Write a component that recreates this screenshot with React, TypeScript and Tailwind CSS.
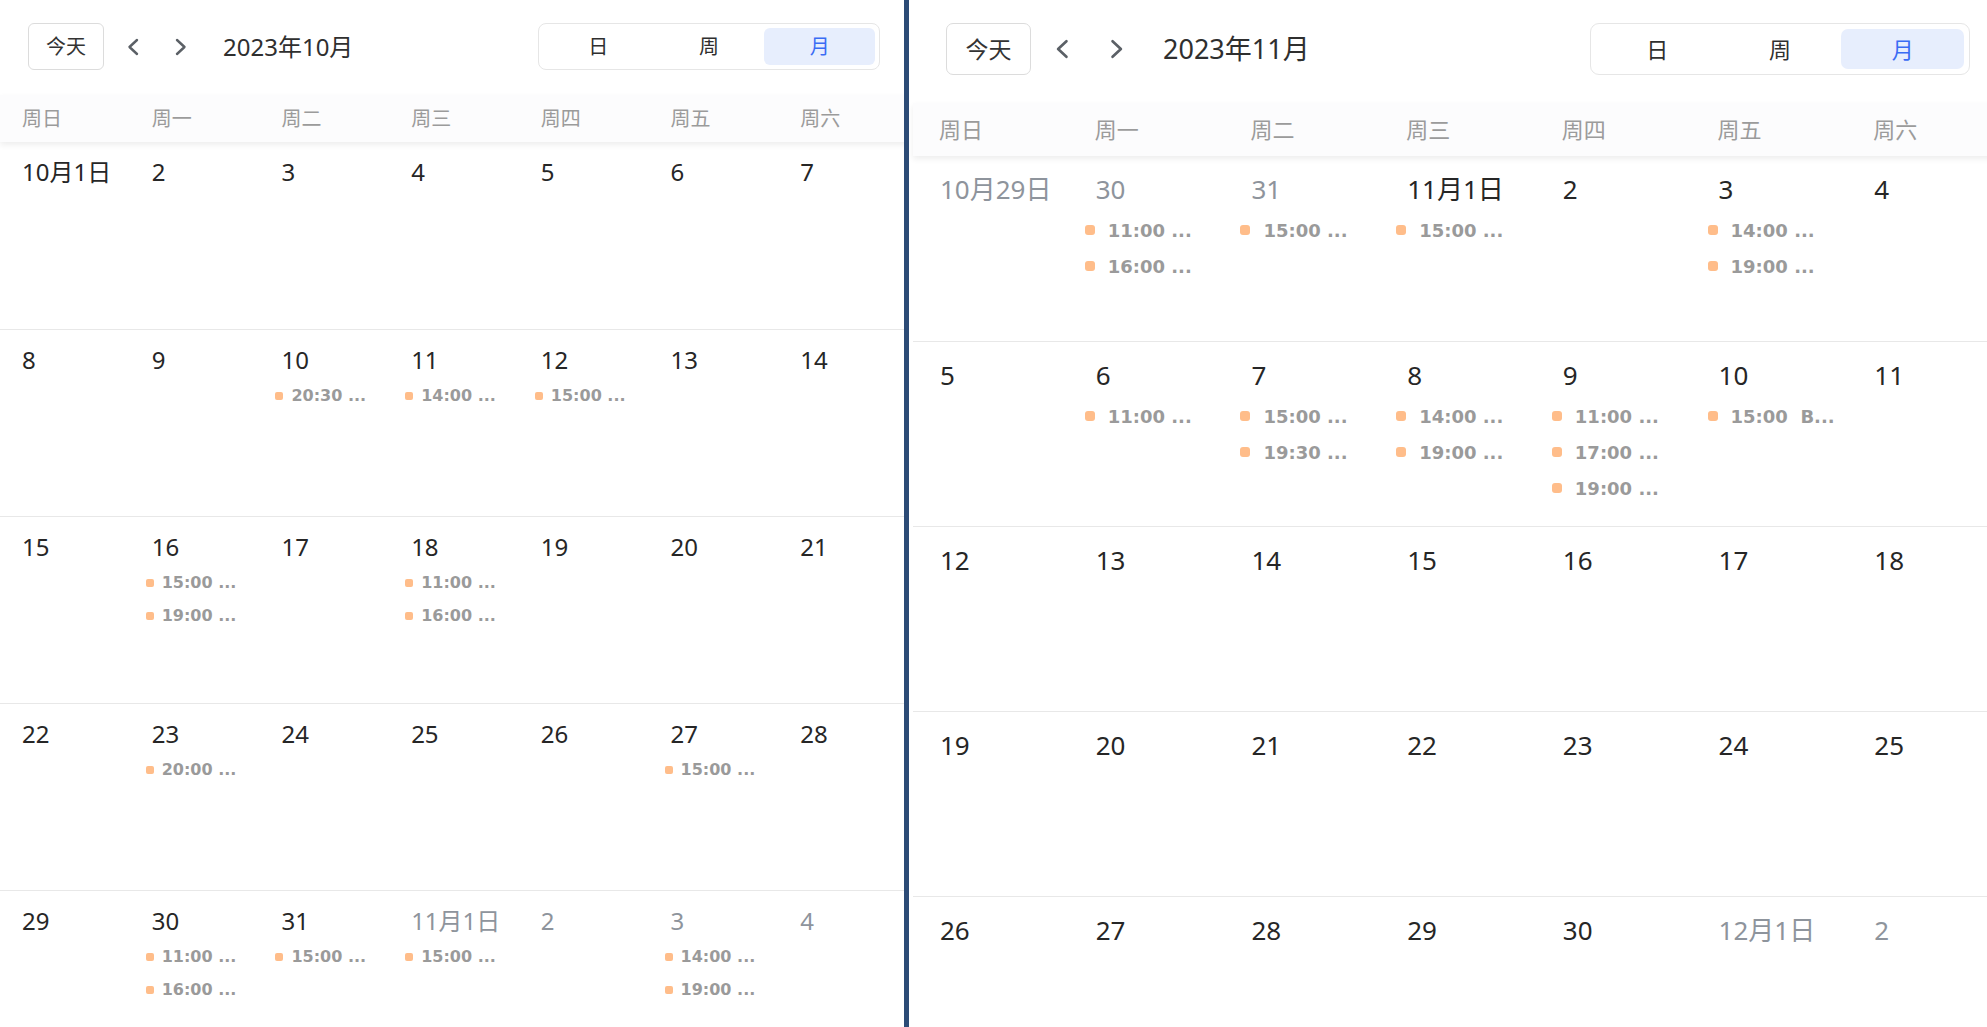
import React from 'react';

type Cell = { label: string; muted?: boolean; events?: string[] };

const d = (label: string, events: string[] = [], muted = false): Cell => ({ label, events, muted });
const m = (label: string, events: string[] = []): Cell => d(label, events, true);

const WEEKDAYS = ['周日', '周一', '周二', '周三', '周四', '周五', '周六'];

const october: Cell[][] = [
  [d('10月1日'), d('2'), d('3'), d('4'), d('5'), d('6'), d('7')],
  [d('8'), d('9'), d('10', ['20:30 ...']), d('11', ['14:00 ...']), d('12', ['15:00 ...']), d('13'), d('14')],
  [d('15'), d('16', ['15:00 ...', '19:00 ...']), d('17'), d('18', ['11:00 ...', '16:00 ...']), d('19'), d('20'), d('21')],
  [d('22'), d('23', ['20:00 ...']), d('24'), d('25'), d('26'), d('27', ['15:00 ...']), d('28')],
  [d('29'), d('30', ['11:00 ...', '16:00 ...']), d('31', ['15:00 ...']), m('11月1日', ['15:00 ...']), m('2'), m('3', ['14:00 ...', '19:00 ...']), m('4')],
];

const november: Cell[][] = [
  [m('10月29日'), m('30', ['11:00 ...', '16:00 ...']), m('31', ['15:00 ...']), d('11月1日', ['15:00 ...']), d('2'), d('3', ['14:00 ...', '19:00 ...']), d('4')],
  [d('5'), d('6', ['11:00 ...']), d('7', ['15:00 ...', '19:30 ...']), d('8', ['14:00 ...', '19:00 ...']), d('9', ['11:00 ...', '17:00 ...', '19:00 ...']), d('10', ['15:00  B...']), d('11')],
  [d('12'), d('13'), d('14'), d('15'), d('16'), d('17'), d('18')],
  [d('19'), d('20'), d('21'), d('22'), d('23'), d('24'), d('25')],
  [d('26'), d('27'), d('28'), d('29'), d('30'), m('12月1日'), m('2')],
];

// two density presets, the second one is the zoomed-in layout
const SIZES = {
  md: {
    root: 'w-[908px]',
    toolbar: 'h-[95px] px-[28px] pt-[23px]',
    bar: 'h-[47px]',
    today: 'h-[47px] w-[76px] text-[20px] rounded-[6px]',
    prev: 'ml-[22px]',
    next: 'ml-[34px]',
    title: 'ml-[35px] text-[24px]',
    chevron: { w: 14, h: 18 },
    seg: 'h-[47px] w-[342px] p-[4px] rounded-[8px]',
    segItem: 'text-[20px] rounded-[6px]',
    head: 'h-[47px] text-[20px]',
    headCell: 'pl-[22px]',
    row: 'h-[187px]',
    date: 'pt-[15px] pl-[22px] text-[24px] leading-[30px]',
    events: 'mt-[4px] pl-[16px]',
    event: 'h-[33px] gap-[8px] text-[16px]',
    dot: 'size-[8px] rounded-[2px]',
  },
  lg: {
    root: 'w-[1090px]',
    toolbar: 'h-[103px] px-[33px] pt-[23px]',
    bar: 'h-[52px]',
    today: 'h-[52px] w-[85px] text-[23px] rounded-[7px]',
    prev: 'ml-[23px]',
    next: 'ml-[39px]',
    title: 'ml-[38px] text-[27px]',
    chevron: { w: 16, h: 20 },
    seg: 'h-[52px] w-[380px] p-[5px] rounded-[9px]',
    segItem: 'text-[22px] rounded-[7px]',
    head: 'h-[53px] text-[22px]',
    headCell: 'pl-[26px]',
    row: 'h-[185px]',
    date: 'pt-[17px] pl-[27px] text-[26px] leading-[32px]',
    events: 'mt-[7px] pl-[16px]',
    event: 'h-[36px] gap-[13px] text-[18px]',
    dot: 'size-[10px] rounded-[3px]',
  },
};

type Size = keyof typeof SIZES;

function Chevron({ dir, w, h }: { dir: 'left' | 'right'; w: number; h: number }) {
  return (
    <svg width={w} height={h} viewBox="0 0 14 18" fill="none" stroke="#5b6066" strokeWidth="2.4" strokeLinecap="round" strokeLinejoin="round">
      {dir === 'left' ? <path d="M11 2 L3.5 9 L11 16" /> : <path d="M3 2 L10.5 9 L3 16" />}
    </svg>
  );
}

function Toolbar({ size, title }: { size: Size; title: string }) {
  const s = SIZES[size];
  return (
    <div className={`flex items-start justify-between ${s.toolbar}`}>
      <div className={`flex items-center ${s.bar}`}>
        <button className={`flex items-center justify-center border border-[#dcdcdc] bg-white text-[#333] ${s.today}`}>今天</button>
        <span className={s.prev}><Chevron dir="left" {...s.chevron} /></span>
        <span className={s.next}><Chevron dir="right" {...s.chevron} /></span>
        <span className={`text-[#2f2f2f] ${s.title}`}>{title}</span>
      </div>
      <div className={`flex border border-[#e6e6e6] bg-white ${s.seg}`}>
        {['日', '周', '月'].map((v) => (
          <div
            key={v}
            className={`flex flex-1 items-center justify-center ${s.segItem} ${v === '月' ? 'bg-[#e7eefd] text-[#3a6cf4]' : 'text-[#2f2f2f]'}`}
          >
            {v}
          </div>
        ))}
      </div>
    </div>
  );
}

function DayCell({ cell, size }: { cell: Cell; size: Size }) {
  const s = SIZES[size];
  return (
    <div className="min-w-0">
      <div className={`${s.date} ${cell.muted ? 'text-[#8e949c]' : 'text-[#262626]'}`}>{cell.label}</div>
      <div className={s.events}>
        {cell.events?.map((e, i) => (
          <div key={i} className={`flex items-center ${s.event}`}>
            <span className={`shrink-0 bg-[#ffbd8a] ${s.dot}`} />
            <span className="whitespace-pre font-['DejaVu_Sans',sans-serif] font-bold text-[#9a9a9a]">{e}</span>
          </div>
        ))}
      </div>
    </div>
  );
}

function MonthCalendar({ size, title, weeks }: { size: Size; title: string; weeks: Cell[][] }) {
  const s = SIZES[size];
  return (
    <div className={`shrink-0 bg-white ${s.root}`}>
      <Toolbar size={size} title={title} />
      <div className={`relative z-10 grid grid-cols-7 items-center bg-[#fcfcfd] text-[#9b9b9b] shadow-[0_3px_6px_rgba(0,0,0,0.07)] ${s.head}`}>
        {WEEKDAYS.map((w) => (
          <div key={w} className={s.headCell}>{w}</div>
        ))}
      </div>
      {weeks.map((week, i) => (
        <div key={i} className={`grid grid-cols-7 ${s.row} ${i > 0 ? 'border-t border-[#e8e8e8]' : ''}`}>
          {week.map((cell, j) => (
            <DayCell key={j} cell={cell} size={size} />
          ))}
        </div>
      ))}
    </div>
  );
}

export default function App() {
  return (
    <div className="flex h-[1027px] w-[1987px] overflow-hidden bg-white font-['Noto_Sans','Noto_Sans_CJK_SC',sans-serif]">
      <div className="w-[904px] shrink-0 overflow-hidden">
        <MonthCalendar size="md" title="2023年10月" weeks={october} />
      </div>
      <div className="w-[5px] shrink-0 bg-[#2c4b76]" />
      <div className="min-w-0 flex-1 overflow-hidden pl-[4px]">
        <MonthCalendar size="lg" title="2023年11月" weeks={november} />
      </div>
    </div>
  );
}
